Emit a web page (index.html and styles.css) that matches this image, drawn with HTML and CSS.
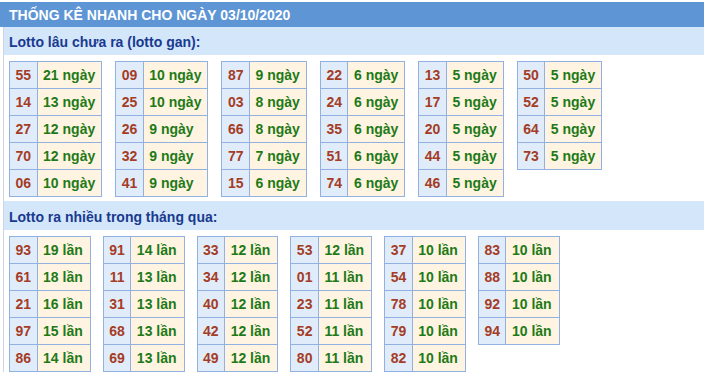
FILE: index.html
```html
<!DOCTYPE html>
<html lang="vi">
<head>
<meta charset="utf-8">
<title>Thống kê nhanh</title>
<link rel="stylesheet" href="styles.css">
</head>
<body>
<div class="page">
  <div class="title">THỐNG KÊ NHANH CHO NGÀY 03/10/2020</div>
  <div class="box">
    <div class="sub">Lotto lâu chưa ra (lotto gan):</div>
    <div class="group group-gan">
      <table class="lt"><tr><td class="n">55</td><td class="v">21 ngày</td></tr><tr><td class="n">14</td><td class="v">13 ngày</td></tr><tr><td class="n">27</td><td class="v">12 ngày</td></tr><tr><td class="n">70</td><td class="v">12 ngày</td></tr><tr><td class="n">06</td><td class="v">10 ngày</td></tr></table>
      <table class="lt"><tr><td class="n">09</td><td class="v">10 ngày</td></tr><tr><td class="n">25</td><td class="v">10 ngày</td></tr><tr><td class="n">26</td><td class="v">9 ngày</td></tr><tr><td class="n">32</td><td class="v">9 ngày</td></tr><tr><td class="n">41</td><td class="v">9 ngày</td></tr></table>
      <table class="lt"><tr><td class="n">87</td><td class="v">9 ngày</td></tr><tr><td class="n">03</td><td class="v">8 ngày</td></tr><tr><td class="n">66</td><td class="v">8 ngày</td></tr><tr><td class="n">77</td><td class="v">7 ngày</td></tr><tr><td class="n">15</td><td class="v">6 ngày</td></tr></table>
      <table class="lt"><tr><td class="n">22</td><td class="v">6 ngày</td></tr><tr><td class="n">24</td><td class="v">6 ngày</td></tr><tr><td class="n">35</td><td class="v">6 ngày</td></tr><tr><td class="n">51</td><td class="v">6 ngày</td></tr><tr><td class="n">74</td><td class="v">6 ngày</td></tr></table>
      <table class="lt"><tr><td class="n">13</td><td class="v">5 ngày</td></tr><tr><td class="n">17</td><td class="v">5 ngày</td></tr><tr><td class="n">20</td><td class="v">5 ngày</td></tr><tr><td class="n">44</td><td class="v">5 ngày</td></tr><tr><td class="n">46</td><td class="v">5 ngày</td></tr></table>
      <table class="lt"><tr><td class="n">50</td><td class="v">5 ngày</td></tr><tr><td class="n">52</td><td class="v">5 ngày</td></tr><tr><td class="n">64</td><td class="v">5 ngày</td></tr><tr><td class="n">73</td><td class="v">5 ngày</td></tr></table>
    </div>
    <div class="sub sub-2">Lotto ra nhiều trong tháng qua:</div>
    <div class="group group-nhieu">
      <table class="lt"><tr><td class="n">93</td><td class="v">19 lần</td></tr><tr><td class="n">61</td><td class="v">18 lần</td></tr><tr><td class="n">21</td><td class="v">16 lần</td></tr><tr><td class="n">97</td><td class="v">15 lần</td></tr><tr><td class="n">86</td><td class="v">14 lần</td></tr></table>
      <table class="lt"><tr><td class="n">91</td><td class="v">14 lần</td></tr><tr><td class="n">11</td><td class="v">13 lần</td></tr><tr><td class="n">31</td><td class="v">13 lần</td></tr><tr><td class="n">68</td><td class="v">13 lần</td></tr><tr><td class="n">69</td><td class="v">13 lần</td></tr></table>
      <table class="lt"><tr><td class="n">33</td><td class="v">12 lần</td></tr><tr><td class="n">34</td><td class="v">12 lần</td></tr><tr><td class="n">40</td><td class="v">12 lần</td></tr><tr><td class="n">42</td><td class="v">12 lần</td></tr><tr><td class="n">49</td><td class="v">12 lần</td></tr></table>
      <table class="lt"><tr><td class="n">53</td><td class="v">12 lần</td></tr><tr><td class="n">01</td><td class="v">11 lần</td></tr><tr><td class="n">23</td><td class="v">11 lần</td></tr><tr><td class="n">52</td><td class="v">11 lần</td></tr><tr><td class="n">80</td><td class="v">11 lần</td></tr></table>
      <table class="lt"><tr><td class="n">37</td><td class="v">10 lần</td></tr><tr><td class="n">54</td><td class="v">10 lần</td></tr><tr><td class="n">78</td><td class="v">10 lần</td></tr><tr><td class="n">79</td><td class="v">10 lần</td></tr><tr><td class="n">82</td><td class="v">10 lần</td></tr></table>
      <table class="lt"><tr><td class="n">83</td><td class="v">10 lần</td></tr><tr><td class="n">88</td><td class="v">10 lần</td></tr><tr><td class="n">92</td><td class="v">10 lần</td></tr><tr><td class="n">94</td><td class="v">10 lần</td></tr></table>
    </div>
  </div>
</div>
</body>
</html>
```
FILE: styles.css
```css
html, body {
  margin: 0;
  padding: 0;
  background: #ffffff;
}
body {
  font-family: "Liberation Sans", Arial, sans-serif;
  font-size: 14px;
  font-weight: bold;
}
.page {
  padding-top: 2px;
}
.title {
  background: #5d95d5;
  color: #ffffff;
  height: 25px;
  box-sizing: border-box;
  padding: 2px 0 0 9px;
  line-height: 23px;
  white-space: nowrap;
}
.box {
  margin-left: 3px;
  border-left: 1px solid #cdd6e2;
}
.sub {
  background: #d4e6fa;
  color: #183a8f;
  height: 28px;
  box-sizing: border-box;
  padding: 2px 0 0 5px;
  line-height: 26px;
}
.sub-2 {
  margin-top: 4px;
  height: 29px;
  padding-top: 3px;
}
.group {
  display: flex;
  align-items: flex-start;
  margin: 6px 0 0 5px;
}
.group-gan {
  gap: 13px;
}
.group-nhieu {
  gap: 12px;
}
.lt {
  border-collapse: collapse;
  flex: none;
}
.lt td {
  border: 1px solid #93b1e0;
  padding: 5px 5.5px;
  line-height: 16px;
  white-space: nowrap;
}
.lt .n {
  background: #e1ecfa;
  color: #a43c26;
  text-align: center;
}
.lt .v {
  background: #fff4e2;
  color: #1e7a17;
  text-align: left;
  padding-right: 7px;
}
.group-gan .lt .v {
  padding-right: 6px;
}
```
